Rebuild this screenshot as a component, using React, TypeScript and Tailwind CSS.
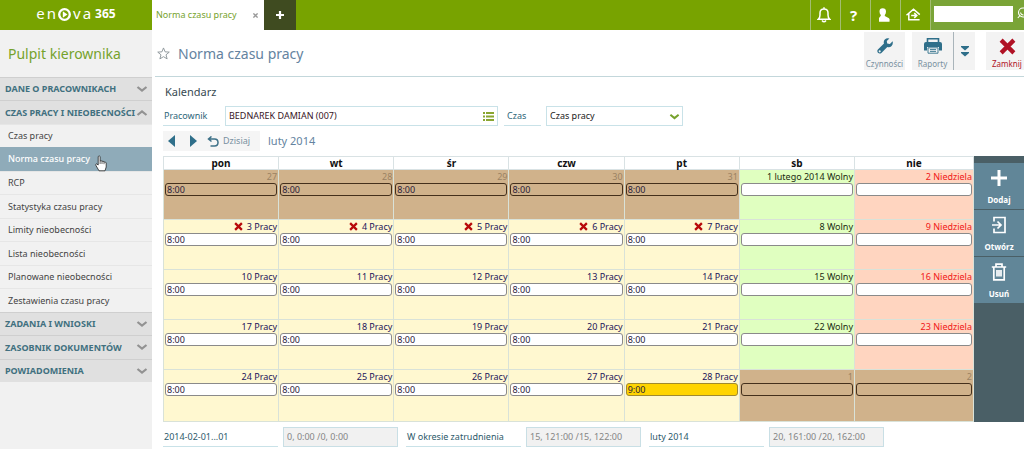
import type { ReactNode } from "react";

type NavRow = { label: string; kind: "closed" | "open" | "item" | "active" };

const nav: NavRow[] = [
  { label: "DANE O PRACOWNIKACH", kind: "closed" },
  { label: "CZAS PRACY I NIEOBECNOŚCI", kind: "open" },
  { label: "Czas pracy", kind: "item" },
  { label: "Norma czasu pracy", kind: "active" },
  { label: "RCP", kind: "item" },
  { label: "Statystyka czasu pracy", kind: "item" },
  { label: "Limity nieobecności", kind: "item" },
  { label: "Lista nieobecności", kind: "item" },
  { label: "Planowane nieobecności", kind: "item" },
  { label: "Zestawienia czasu pracy", kind: "item" },
  { label: "ZADANIA I WNIOSKI", kind: "closed" },
  { label: "ZASOBNIK DOKUMENTÓW", kind: "closed" },
  { label: "POWIADOMIENIA", kind: "closed" },
];

type Kind = "out" | "work" | "sat" | "sun";
type Day = { label: string; kind: Kind; hours?: string; absent?: boolean; changed?: boolean };

const out = (label: string, hours = ""): Day => ({ label, kind: "out", hours });
const work = (n: number, absent = false): Day => ({ label: `${n} Pracy`, kind: "work", hours: "8:00", absent });

const weeks: Day[][] = [
  [
    ...[27, 28, 29, 30, 31].map((n) => out(String(n), "8:00")),
    { label: "1 lutego 2014 Wolny", kind: "sat" },
    { label: "2 Niedziela", kind: "sun" },
  ],
  ...[3, 10, 17].map((start): Day[] => [
    ...[0, 1, 2, 3, 4].map((i) => work(start + i, start === 3)),
    { label: `${start + 5} Wolny`, kind: "sat" },
    { label: `${start + 6} Niedziela`, kind: "sun" },
  ]),
  [
    ...[24, 25, 26, 27].map((n) => work(n)),
    { label: "28 Pracy", kind: "work", hours: "9:00", changed: true },
    out("1"),
    out("2"),
  ],
];

const cellStyle: Record<Kind, string> = {
  out: "bg-[#d0b28b] text-[#9b8263]",
  work: "bg-[#fff8d0] text-[#23145a]",
  sat: "bg-[#e0ffc0] text-[#1c2b12]",
  sun: "bg-[#ffd5c0] text-[#f01818]",
};

function Chevron({ up = false, className }: { up?: boolean; className: string }) {
  return (
    <svg viewBox="0 0 12 8" className={className} fill="none" stroke="currentColor" strokeWidth="2.2" aria-hidden="true">
      <path d={up ? "M1.5 6 6 2.4 10.5 6" : "M1.5 2 6 5.6 10.5 2"} />
    </svg>
  );
}

function RedCross({ className }: { className: string }) {
  return (
    <svg viewBox="0 0 16 16" className={className} fill="none" stroke="currentColor" strokeWidth="4" aria-hidden="true">
      <path d="M2 2 14 14M14 2 2 14" />
    </svg>
  );
}

function TopButton({ label, children }: { label: string; children: ReactNode }) {
  return (
    <button aria-label={label} className="flex w-[30px] shrink-0 items-center justify-center border-l border-[#a3bd72] pr-1 text-white">
      {children}
    </button>
  );
}

function Sidebar() {
  return (
    <aside className="w-[152px] shrink-0 bg-[#f1f1f1]">
      <h2 className="flex h-[47px] items-center px-2 text-[14px] text-[#76a22c]">Pulpit kierownika</h2>
      <nav className="grid h-[305px] auto-rows-fr grid-cols-1">
        {nav.map((row) =>
          row.kind === "closed" || row.kind === "open" ? (
            <button
              key={row.label}
              aria-expanded={row.kind === "open"}
              className="flex min-w-0 items-center justify-between border-t border-[#cfcfcf] bg-[#e0e0e0] pr-1 pl-[5px] text-[9px] font-bold whitespace-nowrap text-[#41707f]"
            >
              {row.label}
              <Chevron up={row.kind === "open"} className="w-3 shrink-0 text-[#929292]" />
            </button>
          ) : (
            <a
              key={row.label}
              href="#"
              className={
                row.kind === "active"
                  ? "relative flex items-center bg-[#8fabb9] px-2 text-[9px] font-medium text-white"
                  : "flex items-center border-t border-[#e6e6e6] px-2 text-[9px] text-[#444]"
              }
            >
              {row.label}
              {row.kind === "active" && (
                <svg viewBox="0 0 12 17" className="absolute top-2 left-[95px] w-3" aria-hidden="true">
                  <path
                    d="M3.2 1.5Q4.2.2 5.1 1.5V6Q6.2 5 7 6.4 8.2 5.5 9 7 10.6 6.4 11.2 8V12L10 15.8H4L1 10.6Q.3 9 1.6 8.8L3.2 10Z"
                    fill="white"
                    stroke="#222"
                    strokeWidth="0.8"
                  />
                  <path d="M5.1 6V9M7 6.4V9M9 7V9.2" stroke="#222" strokeWidth="0.7" />
                </svg>
              )}
            </a>
          ),
        )}
      </nav>
    </aside>
  );
}

function TopBar() {
  return (
    <header className="flex h-[30px] overflow-hidden bg-[#78a300]">
      <div className="flex w-[152px] shrink-0 justify-center pt-[3px] text-white">
        <div className="flex h-[20px] items-center gap-[2px]" aria-label="enova365">
          <span className="text-[15px]">e</span>
          <span className="text-[15px]">n</span>
          <svg viewBox="0 0 14 14" className="mt-[3px] w-[13px]" aria-hidden="true">
            <circle cx="7" cy="7" r="5.700" fill="none" stroke="white" strokeWidth="2.500" />
            <path d="M5.200 3.600 10.200 7 5.200 10.400Z" fill="white" />
          </svg>
          <span className="text-[15px]">v</span>
          <span className="text-[15px]">a</span>
          <span className="pt-px pl-[2px] text-[12px] font-bold">365</span>
        </div>
      </div>
      <div className="flex w-[112px] shrink-0 items-center justify-between bg-white pr-[6px] pl-1 text-[9px] text-[#76a22c]">
        Norma czasu pracy
        <button aria-label="Zamknij kartę" className="text-[#999]">
          <svg viewBox="0 0 6 6" className="w-[5px]" stroke="currentColor" strokeWidth="1.6" aria-hidden="true">
            <path d="m.5.5 5 5m0-5-5 5" />
          </svg>
        </button>
      </div>
      <button aria-label="Nowa karta" className="flex w-8 shrink-0 items-center justify-center bg-[#3f4b20] text-white">
        <svg viewBox="0 0 8 8" className="w-2" stroke="currentColor" strokeWidth="2.2" aria-hidden="true">
          <path d="M4 0v8M0 4h8" />
        </svg>
      </button>
      <div className="ml-auto flex">
        <TopButton label="Powiadomienia">
          <svg viewBox="0 0 14 16" className="w-[14px]" fill="none" stroke="currentColor" strokeWidth="1.5" aria-hidden="true">
            <path d="M1.200 12.300Q3 11 3 8V6Q3 2 7 2t4 4v2q0 3 1.800 4.300ZM5 13.500Q7 16 9 13.500M7 .3V2" />
          </svg>
        </TopButton>
        <TopButton label="Pomoc">
          <span className="text-[15px] font-bold">?</span>
        </TopButton>
        <TopButton label="Użytkownik">
          <svg viewBox="0 0 12 14" className="w-3" fill="currentColor" aria-hidden="true">
            <path d="M1.500 3.500Q1.500.3 4.700.3T8 3.500Q8 5.500 6.800 7V8L11 10.200Q12 11 11.500 13.700H1V10L2.800 7.800V7Q1.500 5.500 1.500 3.500Z" />
          </svg>
        </TopButton>
        <TopButton label="Wyloguj">
          <svg viewBox="0 0 16 14" className="w-[15px]" fill="none" stroke="currentColor" strokeWidth="1.600" aria-hidden="true">
            <path d="M14.500 12.500H3V7H1.300L8 1.200 14.700 7M5.500 8H11M8.800 5.500 11.500 8 8.800 10.500" />
          </svg>
        </TopButton>
        <div className="flex w-[94px] shrink-0 items-start gap-1 border-l border-[#a3bd72] bg-[#7aa437] pt-[6px] pl-[3px]">
          <input aria-label="Szukaj" className="h-4 w-[79px] shrink-0 bg-white px-1 text-[10px] outline-none" />
          <button aria-label="Wyszukaj" className="shrink-0 text-white">
            <svg viewBox="0 0 12 12" className="mt-px w-3" fill="none" stroke="currentColor" strokeWidth="1.100" aria-hidden="true">
              <circle cx="6" cy="5.500" r="4.500" />
              <path d="M3.500 5.500Q4 8 6.500 8M3 8.500.8 11" />
            </svg>
          </button>
        </div>
      </div>
    </header>
  );
}

function TitleBar() {
  return (
    <div className="ml-[3px] flex h-[47px] items-start overflow-hidden border-b border-[#c3d7db] pt-[2px]">
      <button aria-label="Dodaj do ulubionych" className="mt-[15px] ml-[2px] text-[#8b9498]">
        <svg viewBox="0 0 14 14" className="w-[13px]" fill="none" stroke="currentColor" strokeWidth="1" aria-hidden="true">
          <path d="M7 1 8.700 5.200 13.200 5.500 9.700 8.400 10.900 12.800 7 10.400 3.100 12.800 4.300 8.400.8 5.500 5.300 5.200Z" />
        </svg>
      </button>
      <h1 className="mt-[12px] ml-2 text-[14px] leading-5 text-[#6483a0]">Norma czasu pracy</h1>
      <div className="ml-auto flex w-[160px] shrink-0 text-[8px] leading-[10px] text-[#7890a0]">
        <button className="flex h-[38px] w-[41px] shrink-0 flex-col items-center justify-between bg-[#f3f3f3] pt-[6px] pb-px">
          <svg viewBox="0 0 16 16" className="w-4" fill="#2f6f8a" aria-hidden="true">
            <path d="M15.600 3.300 12.900 6 10.200 5.500 9.800 3 12.400.5Q9.800-.4 7.800 1.600 6.200 3.300 7 5.600L.9 11.500Q-.3 13 .9 14.800 2.600 16.300 4.400 15L10.300 9Q12.800 9.700 14.600 8 16.400 5.900 15.600 3.300ZM2.700 14.400A1 1 0 1 1 2.700 12.300 1 1 0 0 1 2.700 14.400Z" fillRule="evenodd" />
          </svg>
          Czynności
        </button>
        <button className="ml-[7px] flex h-[38px] w-[41px] shrink-0 flex-col items-center justify-between bg-[#f3f3f3] pt-[6px] pb-px">
          <svg viewBox="0 0 18 16" className="w-[18px]" aria-hidden="true">
            <path d="M3.500 4V.8h11V4" fill="none" stroke="#2f6f8a" strokeWidth="1.600" />
            <path d="M2 4h14q2 0 2 2v6.500h-3V9H3v3.500H0V6q0-2 2-2Z" fill="#2f6f8a" />
            <path d="M4 9.800h10v5.400H4ZM6 11.600h6M6 13.400h6" fill="#f3f3f3" stroke="#2f6f8a" strokeWidth="0.900" />
          </svg>
          Raporty
        </button>
        <button aria-label="Więcej" className="flex h-[38px] w-[22px] shrink-0 items-center justify-center border-l border-[#a9b4ba] bg-[#f3f3f3]">
          <svg viewBox="0 0 8 11" className="w-2" fill="#2f6f8a" aria-hidden="true">
            <path d="M0 0h8v1L4 4.500 0 1ZM0 6h8v1L4 10.500 0 7Z" />
          </svg>
        </button>
        <button className="ml-[11px] flex h-[38px] w-[42px] shrink-0 flex-col items-center justify-between bg-[#f3f3f3] pt-[6px] pb-px text-[#b01225]">
          <RedCross className="w-[17px]" />
          Zamknij
        </button>
      </div>
    </div>
  );
}

function Filters() {
  return (
    <form className="flex h-5 text-[10px]">
      <label htmlFor="employee" className="w-[57px] shrink-0 border-b border-[#c9e2e8] pt-[3px] pl-px text-[9px] text-[#2d6679]">
        Pracownik
      </label>
      <div className="ml-[5px] flex w-[273px] shrink-0 items-center border border-[#c9e2e8] pr-[3px]">
        <input id="employee" defaultValue="BEDNAREK DAMIAN (007)" className="min-w-0 flex-1 pl-[3px] text-[9px] text-[#371426] outline-none" />
        <button type="button" aria-label="Wybierz pracownika" className="text-[#8aa631]">
          <svg viewBox="0 0 11 9" className="w-[11px]" fill="currentColor" aria-hidden="true">
            <path d="M0 0h2v2H0ZM3 0h8v2H3ZM0 3.500h2v2H0ZM3 3.500h8v2H3ZM0 7h2v2H0ZM3 7h8v2H3Z" />
          </svg>
        </button>
      </div>
      <label htmlFor="time" className="ml-[6px] w-[37px] shrink-0 border-b border-[#c9e2e8] pt-[3px] pl-[3px] text-[9px] text-[#2d6679]">
        Czas
      </label>
      <div className="relative ml-[5px] w-[137px] shrink-0 border border-[#c9e2e8]">
        <select id="time" className="size-full appearance-none pl-[3px] text-[9px] text-[#222] outline-none">
          <option>Czas pracy</option>
        </select>
        <Chevron className="pointer-events-none absolute top-[6px] right-[2px] w-[11px] text-[#76a22c]" />
      </div>
    </form>
  );
}

function MonthNav() {
  return (
    <div className="mt-[5px] flex h-5 items-center text-[#2f6f8a]">
      <div className="flex h-5 w-[97px] items-center bg-[#f5f5f5] pl-[5px]">
        <button aria-label="Poprzedni miesiąc">
          <svg viewBox="0 0 7 12" className="w-[7px]" fill="currentColor" aria-hidden="true"><path d="M7 0v12L0 6Z" /></svg>
        </button>
        <button aria-label="Następny miesiąc" className="ml-[15px]">
          <svg viewBox="0 0 7 12" className="w-[7px]" fill="currentColor" aria-hidden="true"><path d="M0 0v12l7-6Z" /></svg>
        </button>
        <button className="ml-[10px] flex items-center gap-[4px] text-[9px] text-[#7890a0]">
          <svg viewBox="0 0 12 11" className="w-3 text-[#3e7188]" fill="none" stroke="currentColor" strokeWidth="1.500" aria-hidden="true">
            <path d="M1.500 3H7.500q3.500 0 3.500 3.500T7.500 10H3.500M4.500.5 1.500 3l3 2.500" />
          </svg>
          Dzisiaj
        </button>
      </div>
      <span className="ml-2 text-[11px] text-[#6483a0]">luty 2014</span>
    </div>
  );
}

function Calendar() {
  return (
    <table className="w-full min-w-0 table-fixed border-collapse">
      <thead>
        <tr className="h-[13px]">
          {["pon", "wt", "śr", "czw", "pt", "sb", "nie"].map((d) => (
            <th key={d} className="border border-[#d9e2e4] p-0 text-[10px] leading-3 font-bold text-[#111] last:w-[119px]">
              {d}
            </th>
          ))}
        </tr>
      </thead>
      <tbody>
        {weeks.map((week, w) => (
          <tr key={w} className="h-[50px] last:h-[52px]">
            {week.map((day, i) => (
              <td key={i} className={`border border-[#d9e2d8] p-0 align-top ${cellStyle[day.kind]}`}>
                <div className="flex h-[13px] items-center justify-end gap-1 pr-px text-[9px] leading-[13px]">
                  {day.absent && <RedCross className="w-[9px] text-[#b80a0a]" />}
                  {day.label}
                </div>
                <div
                  className={`mx-px flex h-[13px] items-center rounded-[3px] border pl-px text-[9px] leading-[11px] text-[#29203a] ${
                    day.kind === "out" ? "border-[#44301c]" : day.changed ? "border-[#a08a30] bg-[#ffd400]" : "border-[#8a8a8a] bg-white"
                  }`}
                >
                  {day.hours}
                </div>
              </td>
            ))}
          </tr>
        ))}
      </tbody>
    </table>
  );
}

function ActionButton({ label, children }: { label: string; children: ReactNode }) {
  return (
    <button className="flex h-[46px] w-full flex-col items-center justify-between bg-[#618698] pt-[6px] pb-[4px] text-[8px] leading-[10px] font-bold text-white">
      {children}
      {label}
    </button>
  );
}

function Actions() {
  return (
    <div className="flex w-[50px] shrink-0 flex-col gap-px bg-[#4a5f66] pt-[7px]">
      <ActionButton label="Dodaj">
        <svg viewBox="0 0 18 18" className="w-[18px]" stroke="currentColor" strokeWidth="3" aria-hidden="true">
          <path d="M9 1v16M1 9h16" />
        </svg>
      </ActionButton>
      <ActionButton label="Otwórz">
        <svg viewBox="0 0 16 18" className="w-4" fill="none" stroke="currentColor" strokeWidth="1.700" aria-hidden="true">
          <path d="M3 5.500V1.500H14V16.500H3V12.500M1 9H9.500M6.500 5.500 10 9 6.500 12.500" />
        </svg>
      </ActionButton>
      <ActionButton label="Usuń">
        <svg viewBox="0 0 16 18" className="w-4" fill="none" stroke="currentColor" strokeWidth="1.700" aria-hidden="true">
          <path d="M.8 4H15.200M5 4V1.200h6V4M2.800 4V16.800H13.200V4M6 7v6.500M8 7v6.500M10 7v6.500" />
        </svg>
      </ActionButton>
    </div>
  );
}

function Summary() {
  const items = [
    ["period", "2014-02-01...01", "0, 0:00 /0, 0:00"],
    ["employment", "W okresie zatrudnienia", "15, 121:00 /15, 122:00"],
    ["month", "luty 2014", "20, 161:00 /20, 162:00"],
  ];
  return (
    <div className="mt-[5px] flex gap-2 pl-[11px] text-[9px]">
      {items.map(([id, label, value]) => (
        <div key={id} className="flex h-5 gap-[5px]">
          <label htmlFor={id} className="w-[115px] border-b border-[#c9e2e8] pt-[3px] pl-px text-[#2d5a6b]">
            {label}
          </label>
          <input id={id} readOnly value={value} className="w-[115px] border border-[#c9dfe5] bg-[#f1f1f1] pl-[3px] text-[#858585] outline-none" />
        </div>
      ))}
    </div>
  );
}

export default function App() {
  return (
    <div className="flex min-h-screen flex-col overflow-hidden bg-white pb-[2px] font-['Noto_Sans',sans-serif]">
      <TopBar />
      <div className="flex flex-1">
        <Sidebar />
        <main className="min-w-0 flex-1">
          <TitleBar />
          <div className="pl-[11px]">
            <h3 className="pt-[7px] pb-[6px] pl-[2px] text-[11px] leading-4 text-[#374a52]">Kalendarz</h3>
            <Filters />
            <MonthNav />
            <div className="mt-[5px] flex">
              <Calendar />
              <Actions />
            </div>
          </div>
          <Summary />
        </main>
      </div>
    </div>
  );
}
